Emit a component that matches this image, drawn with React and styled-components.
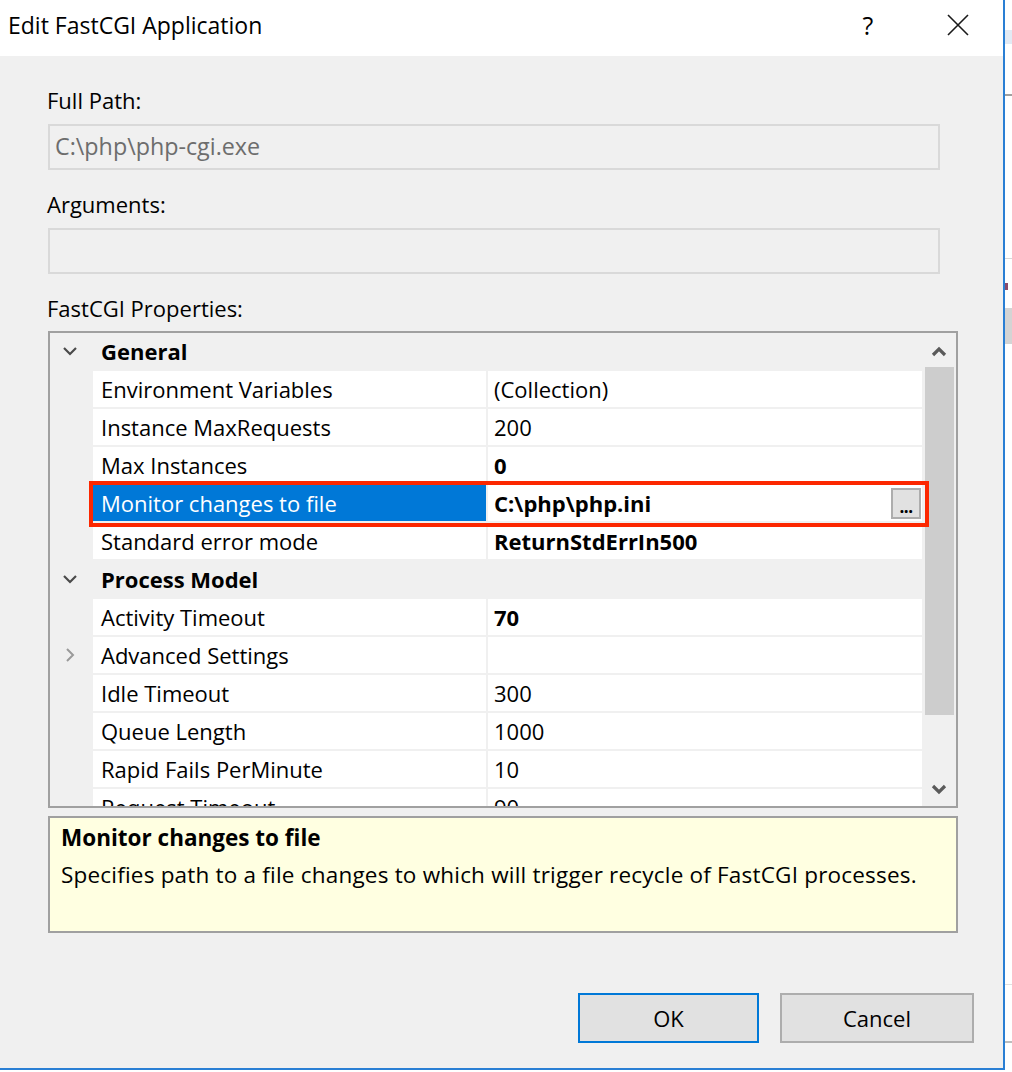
import React from "react";
import styled, { createGlobalStyle } from "styled-components";

const GlobalStyle = createGlobalStyle`
  html, body { margin: 0; padding: 0; background: #ffffff; }
  body { font-family: "Open Sans", "Noto Sans", sans-serif; color: #000; }
`;

const Screen = styled.div`
  display: flex;
  width: 1012px;
  height: 1072px;
  overflow: hidden;
  background: #ffffff;
`;

const Window = styled.div`
  flex-shrink: 0;
  width: 1005px;
  height: 1070px;
  box-sizing: border-box;
  border-right: 2px solid #2a7fd4;
  border-bottom: 2px solid #2a7fd4;
  display: flex;
  flex-direction: column;
  background: #f0f0f0;
`;

const TitleBar = styled.div`
  height: 56px;
  flex-shrink: 0;
  display: flex;
  align-items: center;
  background: #ffffff;
  padding-left: 8px;
`;

const Title = styled.div`
  flex: 1;
  font-size: 23px;
  line-height: 30px;
  margin-top: -6px;
`;

const CaptionButton = styled.div`
  width: 90px;
  height: 56px;
  display: flex;
  align-items: center;
  justify-content: center;
  font-size: 25px;
  margin-top: -6px;
`;

const Body = styled.div`
  flex: 1;
  display: flex;
  flex-direction: column;
  padding-left: 48px;
`;

const FieldLabel = styled.div`
  font-size: 22px;
  line-height: 30px;
  margin-left: -1px;
  margin-top: ${(p) => p.$top}px;
`;

const TextBox = styled.div`
  width: 892px;
  height: 46px;
  box-sizing: border-box;
  margin-top: 9px;
  border: 2px solid #d9d9d9;
  padding: 0 0 3px 5px;
  display: flex;
  align-items: center;
  font-size: 23.3px;
  color: #6d6d6d;
`;

const GridFrame = styled.div`
  position: relative;
  width: 910px;
  height: 477px;
  box-sizing: border-box;
  margin-top: 8px;
  border: 2px solid #a0a0a0;
  display: flex;
`;

const Viewport = styled.div`
  flex: 1;
  overflow-x: visible;
  overflow-y: clip;
  background: #f0f0f0;
  font-size: 22px;
`;

const Row = styled.div`
  position: relative;
  display: flex;
  height: 36px;
  margin-bottom: 2px;
  line-height: 36px;
  white-space: nowrap;
`;

const Gutter = styled.div`
  width: 43px;
  flex-shrink: 0;
  display: flex;
  align-items: center;
  justify-content: center;
  padding-right: 3px;
  box-sizing: border-box;
`;

const CategoryTitle = styled.div`
  padding-left: 8px;
  font-weight: 700;
`;

const NameCell = styled.div`
  width: 393px;
  flex-shrink: 0;
  box-sizing: border-box;
  padding-left: 8px;
  background: ${(p) => (p.$selected ? "#0078d7" : "#ffffff")};
  color: ${(p) => (p.$selected ? "#ffffff" : "#000000")};
`;

const ValueCell = styled.div`
  flex: 1;
  margin-left: 2px;
  padding-left: 6px;
  display: flex;
  align-items: center;
  background: #ffffff;
  font-weight: ${(p) => (p.$bold ? 700 : 400)};
`;

const BrowseButton = styled.div`
  margin-left: auto;
  margin-right: 1px;
  width: 30px;
  height: 31px;
  box-sizing: border-box;
  border: 2px solid #adadad;
  background: #e1e1e1;
  display: flex;
  align-items: flex-end;
  justify-content: center;
  font-size: 17px;
  line-height: 21px;
  font-weight: 700;
  letter-spacing: -0.5px;
`;

const FocusRing = styled.div`
  position: absolute;
  z-index: 2;
  top: -4px;
  left: 39px;
  width: 840px;
  height: 46px;
  box-sizing: border-box;
  border: 4px solid #fc2700;
  pointer-events: none;
`;

const ScrollBar = styled.div`
  width: 34px;
  flex-shrink: 0;
  display: flex;
  flex-direction: column;
  background: #f0f0f0;
`;

const ScrollArrow = styled.div`
  height: 34px;
  display: flex;
  align-items: center;
  justify-content: center;
  padding: ${(p) => (p.$down ? "0 0 0 0" : "3px 0 0 0")};
  box-sizing: border-box;
`;

const ScrollThumb = styled.div`
  height: 348px;
  margin: 0 2px 0 3px;
  background: #cdcdcd;
`;

const ScrollTrack = styled.div`
  flex: 1;
`;

const InfoPanel = styled.div`
  width: 910px;
  height: 117px;
  box-sizing: border-box;
  margin-top: 8px;
  border: 2px solid #a0a0a0;
  background: #ffffe1;
  padding: 5px 11px 0;
  font-size: 22.5px;
  line-height: 30px;
`;

const InfoTitle = styled.div`
  font-weight: 700;
`;

const InfoText = styled.div`
  margin-top: 7px;
  letter-spacing: 0.2px;
`;

const ButtonRow = styled.div`
  display: flex;
  justify-content: flex-end;
  gap: 21px;
  margin-top: 60px;
  padding-right: 29px;
`;

const DialogButton = styled.div`
  width: ${(p) => p.$width}px;
  height: 50px;
  box-sizing: border-box;
  border: 2px solid ${(p) => (p.$default ? "#0078d7" : "#adadad")};
  background: #e1e1e1;
  display: flex;
  align-items: center;
  justify-content: center;
  font-size: 22px;
`;

const SideStrip = styled.div`
  flex: 1;
  display: flex;
  flex-direction: column;
  background: #ffffff;
`;

const StripMark = styled.div`
  height: ${(p) => p.$h}px;
  margin-top: ${(p) => p.$top}px;
  width: ${(p) => p.$w || 7}px;
  background: ${(p) => p.$color};
`;

const Chevron = ({ dir, color = "#505050", size = 16, weight = 2.4 }) => {
  const pts = {
    down: "2,5 8,11 14,5",
    up: "2,11 8,5 14,11",
    right: "5,2 11,8 5,14",
  }[dir];
  return (
    <svg width={size} height={size} viewBox="0 0 16 16">
      <polyline points={pts} fill="none" stroke={color} strokeWidth={weight} />
    </svg>
  );
};

const CloseGlyph = () => (
  <svg width="22" height="22" viewBox="0 0 22 22">
    <path d="M1 1 L21 21 M21 1 L1 21" stroke="#1a1a1a" strokeWidth="1.6" />
  </svg>
);

const sections = [
  {
    title: "General",
    rows: [
      { name: "Environment Variables", value: "(Collection)" },
      { name: "Instance MaxRequests", value: "200" },
      { name: "Max Instances", value: "0", bold: true },
      { name: "Monitor changes to file", value: "C:\\php\\php.ini", bold: true, selected: true },
      { name: "Standard error mode", value: "ReturnStdErrIn500", bold: true },
    ],
  },
  {
    title: "Process Model",
    rows: [
      { name: "Activity Timeout", value: "70", bold: true },
      { name: "Advanced Settings", value: "", expandable: true },
      { name: "Idle Timeout", value: "300" },
      { name: "Queue Length", value: "1000" },
      { name: "Rapid Fails PerMinute", value: "10" },
      { name: "Request Timeout", value: "90" },
    ],
  },
];

export default function App() {
  return (
    <>
      <GlobalStyle />
      <Screen>
        <Window>
          <TitleBar>
            <Title>Edit FastCGI Application</Title>
            <CaptionButton>?</CaptionButton>
            <CaptionButton>
              <CloseGlyph />
            </CaptionButton>
          </TitleBar>
          <Body>
            <FieldLabel $top={29}>Full Path:</FieldLabel>
            <TextBox>C:\php\php-cgi.exe</TextBox>
            <FieldLabel $top={19}>Arguments:</FieldLabel>
            <TextBox />
            <FieldLabel $top={19}>FastCGI Properties:</FieldLabel>
            <GridFrame>
              <Viewport>
                {sections.map((s) => (
                  <React.Fragment key={s.title}>
                    <Row>
                      <Gutter>
                        <Chevron dir="down" color="#4a4a4a" weight={2.2} />
                      </Gutter>
                      <CategoryTitle>{s.title}</CategoryTitle>
                    </Row>
                    {s.rows.map((r) => (
                      <Row key={r.name}>
                        <Gutter>
                          {r.expandable && <Chevron dir="right" color="#9a9a9a" weight={2} />}
                        </Gutter>
                        <NameCell $selected={r.selected}>{r.name}</NameCell>
                        <ValueCell $bold={r.bold}>
                          {r.value}
                          {r.selected && <BrowseButton>...</BrowseButton>}
                        </ValueCell>
                        {r.selected && <FocusRing />}
                      </Row>
                    ))}
                  </React.Fragment>
                ))}
              </Viewport>
              <ScrollBar>
                <ScrollArrow>
                  <Chevron dir="up" color="#5a5a5a" weight={3.2} />
                </ScrollArrow>
                <ScrollThumb />
                <ScrollTrack />
                <ScrollArrow $down>
                  <Chevron dir="down" color="#5a5a5a" weight={3.2} />
                </ScrollArrow>
              </ScrollBar>
            </GridFrame>
            <InfoPanel>
              <InfoTitle>Monitor changes to file</InfoTitle>
              <InfoText>
                Specifies path to a file changes to which will trigger recycle of FastCGI processes.
              </InfoText>
            </InfoPanel>
            <ButtonRow>
              <DialogButton $width={181} $default>
                OK
              </DialogButton>
              <DialogButton $width={194}>Cancel</DialogButton>
            </ButtonRow>
          </Body>
        </Window>
        <SideStrip>
          <StripMark $top={30} $h={14} $color="#e2eaf4" />
          <StripMark $top={50} $h={2} $color="#a0a0a0" />
          <StripMark $top={162} $h={1} $color="#d8d8d8" />
          <StripMark $top={24} $h={7} $w={3} $color="#8a4a6a" />
          <StripMark $top={18} $h={36} $color="#d4d4d4" />
          <StripMark $top={640} $h={1} $color="#e0e0e0" />
          <StripMark $top={56} $h={2} $color="#bdbdbd" />
        </SideStrip>
      </Screen>
    </>
  );
}
